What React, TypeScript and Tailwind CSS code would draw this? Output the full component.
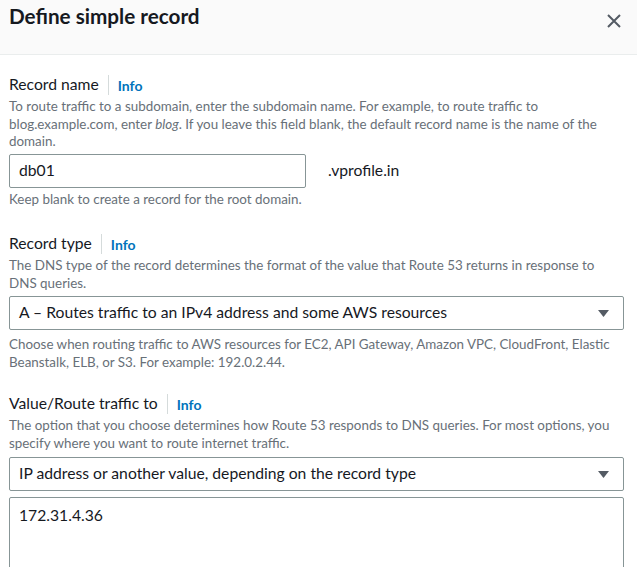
const font = { fontFamily: '"Lato", "Liberation Sans", sans-serif' };

function Label({ text }: { text: string }) {
  return (
    <div className="flex items-center h-[20px]">
      <span className="text-[15.7px] text-[#16191f]">{text}</span>
      <span className="w-px h-[20px] bg-[#d5dbdb] ml-[9px] mr-[9px]" />
      <span className="text-[14px] font-bold text-[#0073bb]">Info</span>
    </div>
  );
}

function Desc({ children }: { children: React.ReactNode }) {
  return <p className="text-[13.4px] leading-[17.5px] text-[#687078] whitespace-nowrap">{children}</p>;
}

function Select({ value }: { value: string }) {
  return (
    <div className="h-[34px] border border-[#879596] rounded-[2px] flex items-center justify-between pl-[9px] pr-[14px]">
      <span className="text-[15.7px] text-[#16191f]">{value}</span>
      <svg width="11" height="7" viewBox="0 0 11 7">
        <path d="M0 0 H11 L5.5 7 Z" fill="#545b64" />
      </svg>
    </div>
  );
}

export default function App() {
  return (
    <div className="w-[637px] h-[567px] overflow-hidden bg-white" style={font}>
      <header className="h-[55px] bg-[#fafafa] border-b border-[#eaeded] flex items-start justify-between pl-[9px] pr-[16px] pt-[3px]">
        <h1 className="text-[20.7px] font-bold text-[#16191f] leading-[26px]">Define simple record</h1>
        <svg width="14" height="14" viewBox="0 0 14 14" className="mt-[11px]">
          <path d="M1 1 L13 13 M13 1 L1 13" stroke="#545b64" strokeWidth="2" fill="none" />
        </svg>
      </header>

      <div className="pl-[9px] pr-[13px] pt-[20px]">
        <Label text="Record name" />
        <div className="mt-[3px]">
          <Desc>
            To route traffic to a subdomain, enter the subdomain name. For example, to route traffic to
            <br />
            blog.example.com, enter <i>blog</i>. If you leave this field blank, the default record name is the name of the
            <br />
            domain.
          </Desc>
        </div>
        <div className="flex items-center mt-[3px]">
          <div className="w-[297px] h-[34px] border border-[#879596] rounded-[2px] flex items-center pl-[9px]">
            <span className="text-[15.7px] text-[#16191f]">db01</span>
          </div>
          <span className="ml-[22px] text-[15.7px] text-[#16191f]">.vprofile.in</span>
        </div>
        <div className="mt-[3px]">
          <Desc>Keep blank to create a record for the root domain.</Desc>
        </div>

        <div className="mt-[26px]">
          <Label text="Record type" />
        </div>
        <div className="mt-[3px]">
          <Desc>
            The DNS type of the record determines the format of the value that Route 53 returns in response to
            <br />
            DNS queries.
          </Desc>
        </div>
        <div className="mt-[4px]">
          <Select value="A – Routes traffic to an IPv4 address and some AWS resources" />
        </div>
        <div className="mt-[6px]">
          <Desc>
            Choose when routing traffic to AWS resources for EC2, API Gateway, Amazon VPC, CloudFront, Elastic
            <br />
            Beanstalk, ELB, or S3. For example: 192.0.2.44.
          </Desc>
        </div>

        <div className="mt-[23px]">
          <Label text="Value/Route traffic to" />
        </div>
        <div className="mt-[3px]">
          <Desc>
            The option that you choose determines how Route 53 responds to DNS queries. For most options, you
            <br />
            specify where you want to route internet traffic.
          </Desc>
        </div>
        <div className="mt-[5px]">
          <Select value="IP address or another value, depending on the record type" />
        </div>
        <div className="mt-[6px] h-[90px] border border-[#879596] rounded-[2px] pl-[9px] pt-[5px]">
          <span className="text-[15.7px] text-[#16191f]">172.31.4.36</span>
        </div>
      </div>
    </div>
  );
}
